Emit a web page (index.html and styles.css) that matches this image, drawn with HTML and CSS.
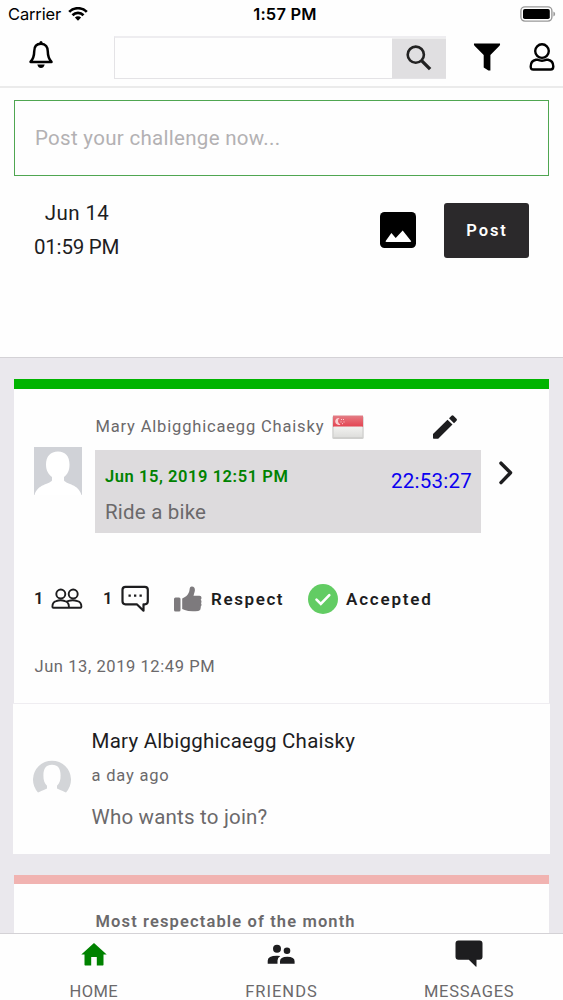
FILE: index.html
```html
<!DOCTYPE html>
<html lang="en">
<head>
<meta charset="utf-8">
<title>Challenges</title>
<link rel="stylesheet" href="styles.css">
</head>
<body>
<div class="app">
  <div class="status">
    <div class="carrier"><span>Carrier</span>
      <svg width="20" height="14" viewBox="0 0 20 14" fill="none" stroke="#000" stroke-width="2.7"><path d="M1.2 4.9a12.4 12.4 0 0 1 17.6 0M4.5 8.2a7.8 7.8 0 0 1 11 0"/><path d="M6.9 10.6a4.4 4.4 0 0 1 6.2 0L10 13.7z" fill="#000" stroke="none"/></svg>
    </div>
    <div class="clock">1:57 PM</div>
    <svg class="battery" width="36" height="16" viewBox="0 0 36 16"><rect x=".9" y=".9" width="31" height="14.2" rx="4" fill="none" stroke="#999" stroke-width="1.4"/><rect x="3" y="3" width="26.8" height="10" rx="1.8"/><path d="M33.4 5.5q1.8.8 1.8 2.5t-1.8 2.5z" fill="#999"/></svg>
  </div>

  <header class="header">
    <svg class="bell" width="26" height="30" viewBox="0 0 26 30"><path d="M13 3.8C8.300 3.800 6.200 7 6.200 11.400c0 5.400-1.200 7.600-3.700 10.500h21C21 19 19.800 16.800 19.800 11.400 19.800 7 17.700 3.800 13 3.800z" fill="none" stroke="#000" stroke-width="2.500" stroke-linejoin="round"/><rect x="11.500" y="1" width="3" height="4" rx="1.500"/><path d="M9.300 24.500h7.400q-1 3.500-3.700 3.500t-3.700-3.500z"/></svg>
    <div class="search"><div class="field"></div><div class="go"><svg width="26" height="26" viewBox="0 0 26 26" fill="none" stroke="#222"><circle cx="9.800" cy="9.700" r="8.100" stroke-width="2.600"/><path d="M15.800 15.900l8.300 8.200" stroke-width="3.400"/></svg></div></div>
    <svg class="filter" width="28" height="28" viewBox="0 0 28 28"><path d="M1 .6h26q.4 1.200-.5 2.200L17.400 12v15.400h-2l-4.700-3V12L1.500 2.800Q.6 1.800 1 .6z"/></svg>
    <svg class="person" width="26" height="28" viewBox="0 0 26 28" fill="none" stroke="#000" stroke-width="2.400"><circle cx="13" cy="8.100" r="6.800"/><path d="M7 16.700h1.200q4.800 2 9.600 0H19q5.300 1 5.300 6.800 0 3-2.600 3H4.300q-2.600 0-2.600-3 0-5.800 5.300-6.800z"/></svg>
  </header>

  <section class="composer">
    <div class="prompt">Post your challenge now...</div>
    <div class="tools">
      <div class="when"><div class="day">Jun 14</div><div class="time">01:59 PM</div></div>
      <svg class="image" width="36" height="36" viewBox="0 0 36 36"><rect width="36" height="36" rx="4.500"/><path d="M5.500 29.200l5.900-8.200 4.300 5 7-7.600 8.500 10.800q-.3.700-1 .8H6.500q-.8-.1-1-.8z" fill="#fff"/></svg>
      <div class="post">Post</div>
    </div>
  </section>

  <main class="feed">
    <article class="card">
      <div class="top">
        <svg class="avatar" width="48" height="48" viewBox="0 0 48 48"><rect width="48" height="48" fill="#d0d2d7"/><path d="M24 4.500c7.500 0 11.500 5 11.500 13 0 6-2 10-5.500 12.500v3.500c3 4 14.500 3.500 17.500 14.500H.5c3-11 14.500-10.500 17.500-14.500V30c-3.500-2.500-6-6.500-6-12.500 0-8 4.500-13 12-13z" fill="#fff"/></svg>
        <div class="main">
          <div class="who"><span class="name">Mary Albigghicaegg Chaisky</span>
            <svg class="flag" width="32" height="26" viewBox="0 0 32 26"><defs><linearGradient id="r" x2="0" y2="1"><stop offset="0" stop-color="#e08088"/><stop offset=".3" stop-color="#e66a74"/><stop offset="1" stop-color="#e34451"/></linearGradient><linearGradient id="w" x2="0" y2="1"><stop offset="0" stop-color="#f2f2f0"/><stop offset="1" stop-color="#dededc"/></linearGradient></defs><rect x=".3" y="2" width="31.400" height="23" rx="1.500" fill="#cfcfcd"/><rect x="1" y="1.500" width="30" height="11.300" fill="url(#r)"/><rect x="1.600" y="12.600" width="28.800" height="10.400" fill="url(#w)"/><path d="M7.500 4a3.500 3.500 0 1 0 1 6.400 3.600 3.600 0 0 1-1-6.400z" fill="#fbd0d2"/><path d="M9 5.500h1M11 5.500h1M8.500 8h1M11.500 8h1M10 9.700h1" stroke="#fbd0d2"/></svg>
            <svg class="pencil" width="26" height="26" viewBox="0 0 26 26" fill="#1d1d1f"><path d="M1 20L15.500 5.700l5 4.900L6.200 24.800H1.700q-.7 0-.7-.7zM17 4.300l2.500-2.500q1-1 2 0l3 3q1 1 0 2L22 9.200z"/></svg>
          </div>
          <div class="challenge">
            <div><div class="due">Jun 15, 2019 12:51 PM</div><div class="title">Ride a bike</div></div>
            <div class="left">22:53:27</div>
          </div>
        </div>
        <svg class="chev" width="15" height="24" viewBox="0 0 15 24" fill="none" stroke="#1d1d1f" stroke-width="3.500" stroke-linecap="round" stroke-linejoin="round"><path d="M2 2.200l9.500 9.600L2 21.600"/></svg>
      </div>
      <div class="actions">
        <b class="num">1</b>
        <svg class="people" width="32" height="22" viewBox="0 0 32 22" fill="none" stroke="#1d1d1f" stroke-width="1.900"><circle cx="9.800" cy="6" r="4.500"/><circle cx="22.200" cy="6" r="4.500"/><path d="M5.200 13.200q-3.800 1-3.800 5.500 0 1 1 1h14.500q1 0 1-1 0-4.500-4-5.500-4.300-2-8.700 0zM15.500 13.700l2.300-.9q4.300-1.300 8.700.4 3.900 1 3.900 5.500 0 1-1 1H17"/></svg>
        <b class="num second">1</b>
        <svg class="bubble" width="30" height="30" viewBox="0 0 30 30"><path d="M4.500 2.800h19.300q3 0 3 3v11.500q0 3-3 3h-1.300v6.400l-6.700-6.400H4.500q-3 0-3-3V5.800q0-3 3-3z" fill="none" stroke="#1d1d1f" stroke-width="2.200" stroke-linejoin="round"/><path d="M7.500 11.700h2.300M13 11.700h2.300M18.500 11.700h2.300" stroke="#1d1d1f" stroke-width="2.200"/></svg>
        <svg class="thumb" width="28" height="26" viewBox="0 0 28 26" fill="#7d7a7d"><rect x="0" y="11.500" width="6.500" height="14" rx="1.500"/><path d="M8.200 12.500c4-1.500 6.800-4.500 7.300-8.500.2-2.500.8-3.500 2.400-3.500 2.700 0 3.400 2.500 2.800 5l-1.200 4.200h6q2 .2 2 2 0 1.500-.8 2.100 1.300 1 .4 3.600 1 1.500-.4 3.400.5 3.800-2.400 4.200-9 1-13.600-1l-2.500-1z"/></svg>
        <b class="respect">Respect</b>
        <svg class="check" width="30" height="30" viewBox="0 0 30 30"><circle cx="15" cy="15" r="15" fill="#62cc63"/><path d="M8.500 15.700l4.300 4.300 8.500-8.800" fill="none" stroke="#fff" stroke-width="2.600" stroke-linecap="round"/></svg>
        <b class="accepted">Accepted</b>
      </div>
      <div class="posted">Jun 13, 2019 12:49 PM</div>
    </article>
    <article class="comment">
      <svg class="face" width="38" height="38" viewBox="0 0 38 38"><path d="M5 32.500A19 19 0 1 1 33 32.500q-2-1-9-4v-2.800c2.600-2.300 3.600-5.700 3.600-10.200C27.600 8.500 25 4.700 19 4.700S10.400 8.500 10.400 15.500c0 4.500 1 7.900 3.600 10.200v2.800q-7 3-9 4z" fill="#d3d5d8"/></svg>
      <div><div class="author">Mary Albigghicaegg Chaisky</div><div class="ago">a day ago</div><div class="text">Who wants to join?</div></div>
    </article>
    <article class="card award"><div class="best">Most respectable of the month</div></article>
  </main>

  <nav class="tabs">
    <div class="tab"><svg width="26" height="30" viewBox="0 0 26 30" fill="#008200"><path d="M13 4L.3 15.500h3.200v10.300q0 .7.700.7h6V18h5.600v8.500h6q.7 0 .7-.7V15.500h3.200z"/></svg><span class="t1">HOME</span></div>
    <div class="tab"><svg width="28" height="30" viewBox="0 0 28 30" fill="#1d1d1f"><circle cx="10" cy="9.700" r="4"/><circle cx="20" cy="11.700" r="3.300"/><path d="M.7 24.700v-3q0-5 9.300-5 2 0 3.300.3-2.800 1.700-2.800 4.500v3.200zM13 24.700v-2.500q0-4.500 7.300-4.500t7.300 4.500v2.500z"/></svg><span class="t2">FRIENDS</span></div>
    <div class="tab"><svg width="28" height="30" viewBox="0 0 28 30" fill="#1d1d1f"><path d="M3.500 1.500h21q3 0 3 3v13.200q0 3-3 3h-3v6.500q0 1-.8.4l-6.900-6.900H3.500q-3 0-3-3V4.500q0-3 3-3z"/></svg><span class="t3">MESSAGES</span></div>
  </nav>
</div>
</body>
</html>
```
FILE: styles.css
```css
* { box-sizing: border-box; }
body { margin: 0; font-family: Roboto, sans-serif; font-size: 16.5px; line-height: 22px; color: #1d1d1f; background: #fff; }
svg { display: block; flex: none; }
span, b, .prompt, .when, .due, .title, .left, .posted, .author, .ago, .text, .best { white-space: nowrap; }
b { font-weight: 600; }
.app { width: 563px; height: 1000px; display: flex; flex-direction: column; overflow: hidden; background: #fefefe; }

.status { display: grid; grid-template-columns: 1fr auto 1fr; height: 28px; padding: 0 7px 0 8px; align-items: center; font-family: Inter, sans-serif; color: #000; flex: none; }
.carrier { display: flex; align-items: center; gap: 7px; letter-spacing: -.15px; }
.clock { font-weight: 600; letter-spacing: .2px; padding-left: 6px; }
.battery { justify-self: end; }

.header { height: 60px; flex: none; display: flex; align-items: center; padding-left: 28px; border-bottom: 2px solid #ebebeb; }
.bell { margin-bottom: 4px; }
.search { display: flex; width: 332px; height: 43px; margin: 0 27px 0 60px; border: 1px solid #e4e3e6; border-top: 2px solid #eeedf0; border-right: 0; }
.field { flex: 1; }
.go { width: 54px; background: #e0dfe1; display: flex; align-items: center; justify-content: center; border-top: 1px solid #eee; }
.filter { margin-right: 28px; }

.composer { height: 270px; flex: none; padding: 12px 14px 0; border-bottom: 1px solid #d4d2d6; }
.prompt { height: 76px; line-height: 75px; padding-left: 20px; border: 1px solid #4fa651; font-size: 20.5px; letter-spacing: .3px; color: #b3b1b3; }
.tools { display: flex; align-items: center; height: 68px; margin-top: 20px; padding: 0 20px; }
.when { flex: 1; width: 85px; font-size: 20.5px; line-height: 34px; }
.day { width: 85px; text-align: center; letter-spacing: .4px; padding-left: 1px; }
.time { letter-spacing: -.21px; }
.post { width: 85px; height: 55px; margin-left: 28px; border-radius: 3px; background: #2b292b; color: #fff; font-weight: 600; letter-spacing: 1.9px; line-height: 55px; text-align: center; padding-left: 1px; }

.feed { flex: 1; min-height: 0; overflow: hidden; background: #eae8ed; padding: 21px 13px 0; }
.card { margin: 0 1px; height: 324px; background: #fefefe; border-top: 10px solid #00b400; padding: 25px 20px 0; }
.top { display: flex; }
.avatar { margin-top: 33px; }
.main { width: 386px; margin: 0 18px 0 13px; }
.who { display: flex; align-items: center; height: 26px; margin-bottom: 10px; color: #6b696b; }
.name { width: 237px; letter-spacing: .83px; line-height: 26px; padding-left: .5px; }
.pencil { margin-left: 68px; }
.challenge { height: 83px; padding: 16px 9px 0 10px; background: #dddbdd; display: flex; justify-content: space-between; }
.due { font-weight: 600; color: #008200; letter-spacing: .56px; }
.title { font-size: 20.5px; line-height: 28px; letter-spacing: .2px; color: #6b696b; margin-top: 10px; }
.left { font-size: 20.5px; line-height: 31px; letter-spacing: .25px; color: #0b00f0; }
.chev { margin-top: 47px; }
.actions { display: flex; align-items: center; height: 32px; margin-top: 50px; }
.num { width: 17px; }
.second { margin-left: 20px; }
.bubble { margin-left: 1px; }
.thumb { margin-left: 23px; }
.respect { width: 74px; margin-left: 9px; letter-spacing: 1.6px; font-size: 17px; }
.check { margin-left: 23px; }
.accepted { margin-left: 8px; letter-spacing: 1.8px; font-size: 17px; }
.posted { margin-top: 41px; letter-spacing: .58px; color: #6b696b; padding-left: .5px; }

.comment { height: 151px; background: #fefefe; border-top: 1px solid #efedf1; display: flex; padding: 23px 20px 0; }
.face { margin-top: 33px; margin-right: 20.500px; }
.author { font-size: 20.5px; line-height: 28px; letter-spacing: .24px; }
.ago { margin-top: 10px; letter-spacing: .8px; color: #6b696b; }
.text { margin-top: 16px; font-size: 20.5px; line-height: 28px; letter-spacing: .2px; color: #6b696b; }
.award { margin-top: 21px; border-top: 9px solid #f1b3b1; padding: 27px 0 0 81.500px; }
.best { font-weight: 600; letter-spacing: 1.13px; color: #6b696b; }

.tabs { height: 67px; flex: none; border-top: 1px solid #d4d2d6; display: grid; grid-template-columns: repeat(3, 1fr); color: #6b696b; background: #fefefe; }
.tab { display: flex; flex-direction: column; align-items: center; padding-top: 5px; }
.tab span { margin-top: 12px; }
.t1 { letter-spacing: .4px; }
.t2 { letter-spacing: 1px; }
.t3 { letter-spacing: .75px; }
```
